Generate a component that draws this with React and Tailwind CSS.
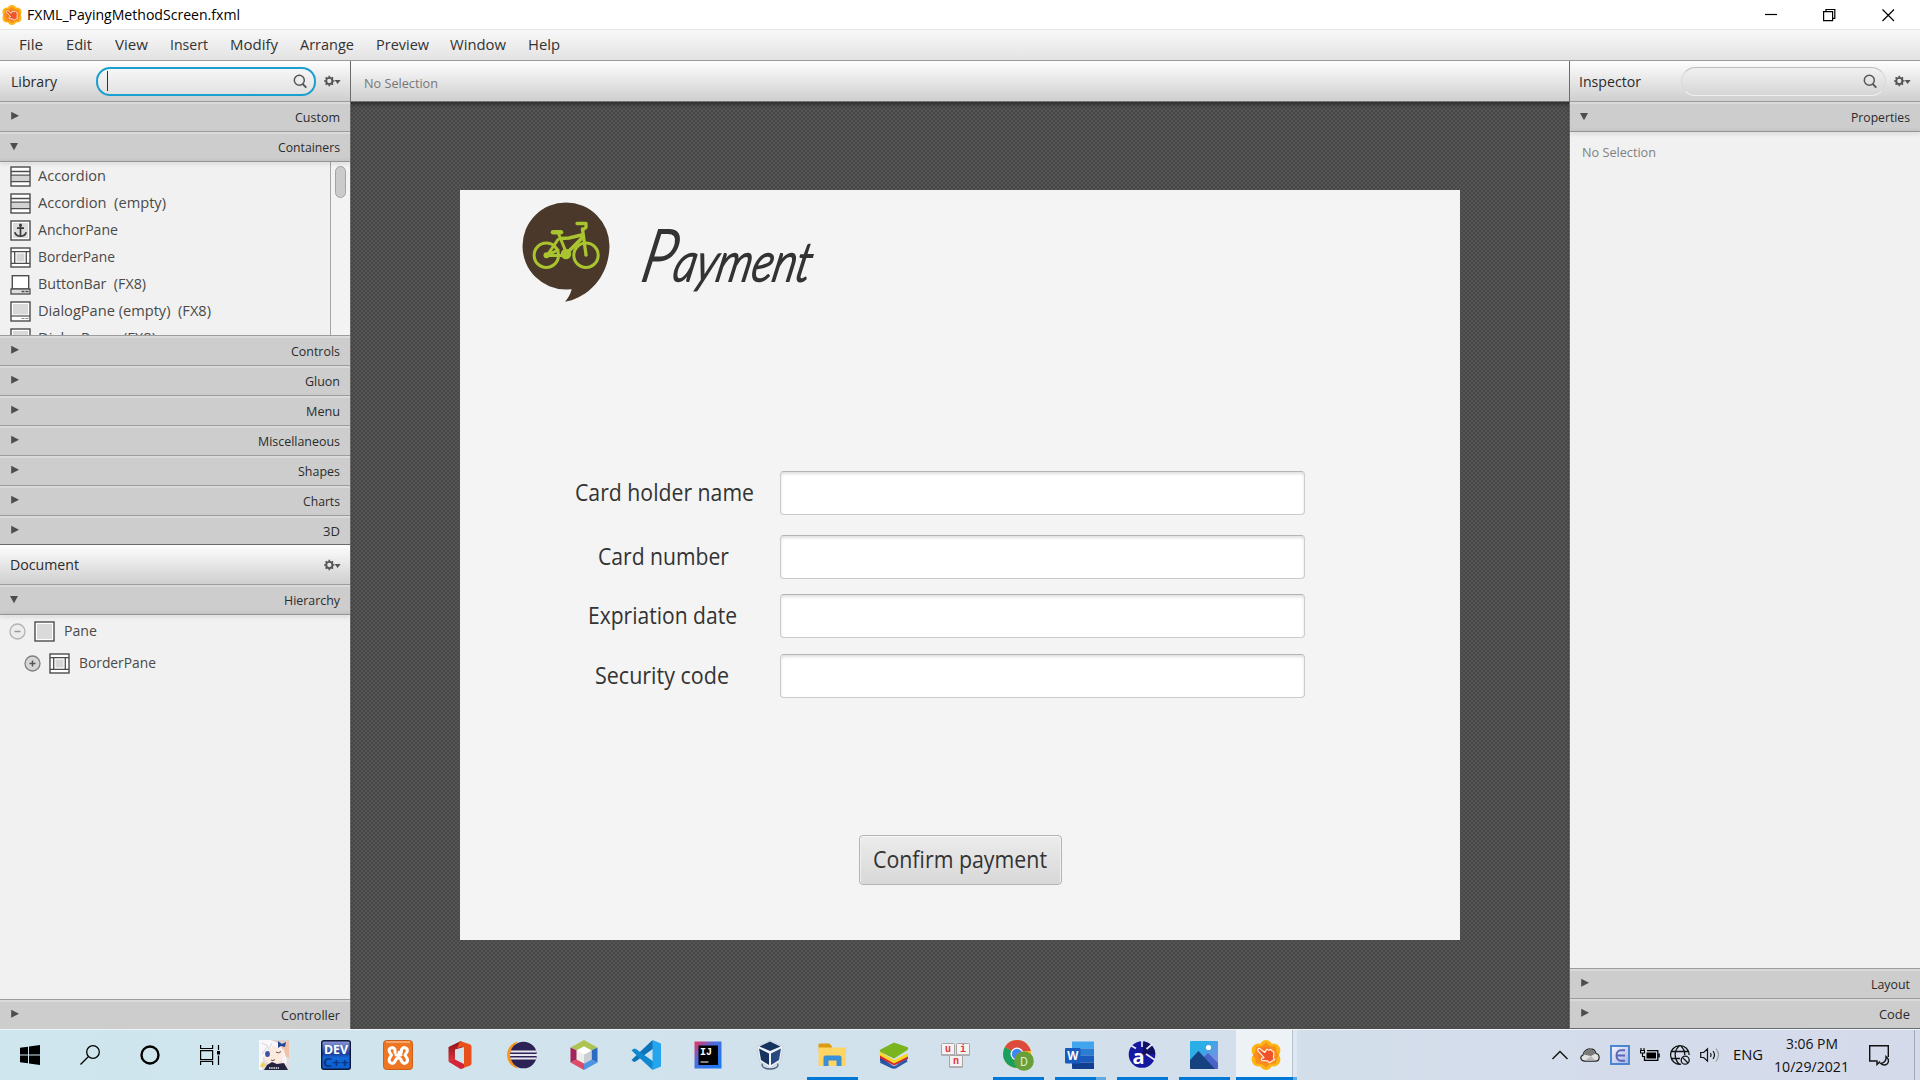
import React, { useLayoutEffect, useRef } from "react";

/* Text set to a fixed measure: glyphs are condensed or widened to fill `w`. */
function T({ w, className = "", children }) {
  const ref = useRef(null);
  useLayoutEffect(() => {
    const el = ref.current;
    el.style.transform = "none";
    const natural = el.getBoundingClientRect().width;
    if (natural) el.style.transform = `scaleX(${w / natural})`;
  }, [w, children]);
  return (
    <span className={`inline-block shrink-0 whitespace-pre ${className}`} style={{ width: w }}>
      <span ref={ref} className="inline-block origin-left">{children}</span>
    </span>
  );
}

const Gear = () => (
  <svg width="17" height="12" viewBox="0 0 17 12" className="shrink-0">
    <circle cx="5.3" cy="6" r="3.1" fill="none" stroke="#555" strokeWidth="1.9" />
    <g stroke="#555" strokeWidth="1.7">
      <path d="M5.3 .8v1.8M5.3 9.4v1.8M.1 6h1.8M8.7 6h1.8M1.6 2.3l1.3 1.3M7.7 8.4L9 9.7M9 2.3L7.7 3.6M2.9 8.4L1.6 9.7" />
    </g>
    <path d="M10.6 5h6l-3 4z" fill="#555" />
  </svg>
);

const Magnifier = () => (
  <svg width="15" height="15" viewBox="0 0 15 15" fill="none" stroke="#555" strokeWidth="1.5" className="shrink-0">
    <circle cx="6.3" cy="6.3" r="5" />
    <path d="M9.6 9.9L13.3 13.6" strokeWidth="2" />
  </svg>
);

function Section({ label, w, open, bottom = "", className = "" }) {
  return (
    <div className={`flex h-[30px] shrink-0 justify-between border-t border-[#9c9c9c] bg-[#cdcdcd] pl-[10px] pr-[10px] ${bottom} ${className}`}>
      <svg width="10" height="10" viewBox="0 0 10 10" className="mt-[9px]">
        {open ? <path d="M0 2h8L4 9.3z" fill="#4d4d4d" /> : <path d="M1.2.8v8L9 4.8z" fill="#4d4d4d" />}
      </svg>
      <T w={w} className="mt-[6px] text-[13px] leading-[18px] text-[#2b2b2b]">{label}</T>
    </div>
  );
}
const stripe = "shadow-[inset_0_2px_0_#dadada]";

const S = "#4c4c4c";
function PaneIcon({ kind }) {
  return (
    <svg width="21" height="21" viewBox="0 0 21 21" className="shrink-0">
      {kind !== "buttonbar" && <rect x="1" y="1" width="19" height="19" fill="#fff" stroke={S} strokeWidth="1.4" />}
      {kind === "accordion" && (
        <g>
          <rect x="2" y="10" width="17" height="5" fill="#d2d2d2" />
          <path d="M1 5.5h19M1 9.2h19M1 15.6h19" stroke={S} strokeWidth="1.3" />
        </g>
      )}
      {kind === "anchor" && (
        <g>
          <rect x="3" y="3" width="15" height="15" fill="#dcdcdc" />
          <g fill="none" stroke="#3a3a3a" strokeWidth="1.7">
            <path d="M10.5 5v11M7 8.2h7M4.8 12.2c1 3 3.5 4 5.7 4s4.700-1 5.700-4" />
          </g>
          <circle cx="10.5" cy="5" r="1.5" fill="#3a3a3a" />
        </g>
      )}
      {kind === "border" && (
        <g>
          <path d="M1 4.700h19M1 16.300h19M4.700 4.700v11.600M16.300 4.700v11.600" stroke={S} strokeWidth="1.3" />
          <rect x="6.500" y="6.500" width="8" height="8" fill="#d6d6d6" />
        </g>
      )}
      {kind === "buttonbar" && (
        <g>
          <rect x="2.300" y="1.700" width="16.400" height="13.300" fill="#fff" stroke={S} strokeWidth="1.4" />
          <rect x="1" y="15" width="19" height="5" fill="#dcdcdc" stroke={S} strokeWidth="1.3" />
          <path d="M11.500 17.500h3M15.500 17.500h3" stroke={S} strokeWidth="1.300" />
        </g>
      )}
      {kind === "dialog" && (
        <g>
          <rect x="3" y="3" width="15" height="10.500" fill="#d9d9d9" />
          <path d="M1 15h19" stroke={S} strokeWidth="1.200" />
          <path d="M11.500 17.500h3M15.500 17.500h3" stroke="#8a8a8a" />
        </g>
      )}
      {kind === "pane" && <rect x="3" y="3" width="15" height="15" fill="#dadada" />}
    </svg>
  );
}

const SceneBuilder = ({ size }) => (
  <svg width={size} height={size} viewBox="0 0 30 30" className="shrink-0">
    <g fill="#fdb514">
      <circle cx="15" cy="6.500" r="6.400" /><circle cx="22.500" cy="10.500" r="6.900" /><circle cx="22.500" cy="19.500" r="6.900" />
      <circle cx="15" cy="23.500" r="6.400" /><circle cx="7.500" cy="19.500" r="6.900" /><circle cx="7.500" cy="10.500" r="6.900" />
    </g>
    <path d="M15 2.500l4 3.500 6 .8.800 5.200L28 15l-2.200 3.500-.8 5-6 .700L15 27.500l-4-3.300-6-.7-.800-5L2 15l2.200-3 .8-5.200L11 6z" fill="#f98d1d" />
    <circle cx="15" cy="15" r="8" fill="#f6781f" />
    <path d="M6.800 9.200c.8-1.300 2-.7 3 .2l4 3 2.200-3.200 2 1 1.600-.8 1.600 1.600c1.500.2 1.800 1.500 1.600 3l-.4 3.500 1 2-5.200 3.200-1.700-1.800-5-.2c-1.800-.6-1.600-2.400 0-2.600l1.500-.5-5.700-6.400c-.6-.7-.8-1.300-.5-2z" fill="#f0522a" stroke="#fff3e6" strokeWidth="1.200" strokeLinejoin="round" />
  </svg>
);

const menu = [
  ["File", 24, "ml-[19px]"], ["Edit", 26, "ml-[23px]"], ["View", 33, "ml-[23px]"], ["Insert", 38, "ml-[22px]"], ["Modify", 48, "ml-[22px]"],
  ["Arrange", 54, "ml-[22px]"], ["Preview", 53, "ml-[22px]"], ["Window", 56, "ml-[21px]"], ["Help", 32, "ml-[22px]"],
];

const containers = [
  ["accordion", "Accordion", 68], ["accordion", "Accordion  (empty)", 128], ["anchor", "AnchorPane", 80], ["border", "BorderPane", 77],
  ["buttonbar", "ButtonBar  (FX8)", 108], ["dialog", "DialogPane (empty)  (FX8)", 173], ["dialog", "DialogPane  (FX8)", 118],
];

function Library() {
  return (
    <aside className="flex w-[351px] shrink-0 flex-col border-r border-[#6b6b6b] bg-[#f1f1f1]">
      <div className="flex h-[40px] shrink-0 items-center bg-linear-to-b from-[#fefefe] to-[#cfcfcf]">
        <T w={46} className="ml-[11px] mt-px text-[14.500px] leading-[20px] text-[#2b2b2b]">Library</T>
        <div className="ml-[39px] flex h-[29px] w-[220px] items-center justify-between rounded-[14px] border-2 border-[#1b9fcf] bg-linear-to-b from-[#f6f6f6] to-[#e2e2e2] pl-[9px] pr-[6px]">
          <div className="h-[20px] w-px bg-[#333]" />
          <Magnifier />
        </div>
        <div className="ml-[8px]"><Gear /></div>
      </div>
      <Section label="Custom" w={45} className={stripe} />
      <Section label="Containers" w={62} open className={stripe} />
      <div className="z-10 h-px shrink-0 bg-[#949494] shadow-[0_1px_4px_rgba(0,0,0,.35)]" />
      <div className="flex h-[173px] shrink-0 overflow-hidden">
        <div className="flex w-[330px] flex-col pt-[1px]">
          {containers.map(([k, t, w], i) => (
            <div key={i} className="flex h-[27px] shrink-0 items-center pl-[10px]">
              <PaneIcon kind={k} />
              <T w={w} className="mb-[2px] ml-[7px] text-[14.500px] leading-[20px] text-[#4a4a4a]">{t}</T>
            </div>
          ))}
        </div>
        <div className="flex w-[20px] justify-center border-l border-[#a5a5a5] bg-[#f3f3f3] pt-[4px]">
          <div className="h-[32px] w-[11px] rounded-full border border-[#a3a3a3] bg-[#cbcbcb]" />
        </div>
      </div>
      <Section label="Controls" w={49} className={stripe} />
      <Section label="Gluon" w={35} className={stripe} />
      <Section label="Menu" w={34} className={stripe} />
      <Section label="Miscellaneous" w={82} className={stripe} />
      <Section label="Shapes" w={42} className={stripe} />
      <Section label="Charts" w={37} className={stripe} />
      <Section label="3D" w={17} bottom="border-b border-b-[#6b6b6b]" className={stripe} />
      <div className="flex h-[39px] shrink-0 items-center justify-between bg-linear-to-b from-[#fefefe] to-[#cfcfcf] pl-[10px] pr-[9px]">
        <T w={69} className="text-[14.500px] leading-[20px] text-[#2b2b2b]">Document</T>
        <Gear />
      </div>
      <Section label="Hierarchy" w={56} open className={stripe} />
      <div className="h-px shrink-0 bg-[#949494] shadow-[0_1px_4px_rgba(0,0,0,.35)]" />
      <div className="flex grow flex-col">
        <div className="flex h-[32px] items-center pl-[9px]">
          <svg width="17" height="17" viewBox="0 0 17 17"><circle cx="8.500" cy="8.500" r="7.500" fill="#ececec" stroke="#b3b3b3" strokeWidth="1.300" /><path d="M5.500 8.500h6" stroke="#999" strokeWidth="1.500" /></svg>
          <div className="ml-[8px]"><PaneIcon kind="pane" /></div>
          <T w={33} className="ml-[9px] text-[14.500px] leading-[20px] text-[#4a4a4a]">Pane</T>
        </div>
        <div className="flex h-[32px] items-center pl-[24px]">
          <svg width="17" height="17" viewBox="0 0 17 17"><circle cx="8.500" cy="8.500" r="7.500" fill="#d6d6d6" stroke="#808080" strokeWidth="1.300" /><path d="M5.500 8.500h6M8.500 5.500v6" stroke="#555" strokeWidth="1.500" /></svg>
          <div className="ml-[8px]"><PaneIcon kind="border" /></div>
          <T w={77} className="ml-[9px] text-[14.500px] leading-[20px] text-[#4a4a4a]">BorderPane</T>
        </div>
      </div>
      <Section label="Controller" w={59} className={stripe} />
    </aside>
  );
}

function Logo() {
  const g = "#a9c42f";
  return (
    <svg width="88" height="100" viewBox="0 0 88 100" className="shrink-0">
      <path d="M44 .5A43.500 43.500 0 0 0 44 87.500L49.700 87.300Q48 94 43 99.700C62 97 87 78 87.500 44A43.500 43.500 0 0 0 44 .5z" fill="#4a392a" />
      <g fill="none" stroke={g} strokeLinecap="round" strokeLinejoin="round">
        <circle cx="24.300" cy="53.300" r="12.200" strokeWidth="3" />
        <circle cx="64" cy="53.300" r="12.200" strokeWidth="3" />
        <path d="M55 21.500h9v4l-3.500 2.500" strokeWidth="3.300" />
        <path d="M60.500 27l3.500 26" strokeWidth="3.300" />
        <path d="M39 36.500l8-.5 12.500-3M60.500 35.500L46 50" strokeWidth="3.500" />
        <path d="M37 33l7 17M36 37.500L25 53.500h18M24.500 53.500L36 48" strokeWidth="3" />
        <path d="M31 30.200h8" strokeWidth="4.500" />
      </g>
      <circle cx="44" cy="52" r="5.200" fill={g} />
      <circle cx="24.500" cy="53.300" r="3" fill={g} />
    </svg>
  );
}

const fields = [
  ["Card holder name", 179, "ml-[115px]", "h-[64px]"], ["Card number", 131, "ml-[138px]", "h-[59px]"],
  ["Expriation date", 149, "ml-[128px]", "h-[60px]"], ["Security code", 134, "ml-[135px]", "h-[60px]"],
];

function Canvas() {
  return (
    <main className="flex w-[1218px] shrink-0 flex-col">
      <div className="flex h-[41px] shrink-0 items-center border-b border-[#777] bg-linear-to-b from-[#fefefe] to-[#cfcfcf] pl-[13px]">
        <T w={74} className="mt-[3px] text-[13px] leading-[18px] text-[#777]">No Selection</T>
      </div>
      <div className="flex grow bg-[repeating-conic-gradient(#555_0_25%,#474747_0_50%)] bg-[length:4px_4px] pl-[109px] pt-[88px] shadow-[inset_0_4px_4px_-2px_rgba(0,0,0,.5)]">
        <div className="flex h-[750px] w-[1000px] flex-col bg-[#f4f4f4]">
          <div className="flex h-[281px] shrink-0 items-start pl-[62px] pt-[12px]">
            <Logo />
            <div className="ml-[34px] mt-[9px] -skew-x-[12deg] font-['Lato'] text-[72px] font-light italic leading-[84px] text-[#333] [-webkit-text-stroke:2px_#333] [paint-order:stroke]">
              <T w={186}>P<span className="text-[54px]">ayment</span></T>
            </div>
          </div>
          {fields.map(([t, w, ml, h]) => (
            <div key={t} className={`flex shrink-0 items-start ${h}`}>
              <div className="flex h-[42px] w-[320px] items-center">
                <T w={w} className={`text-[23px] leading-[30px] text-[#333] ${ml}`}>{t}</T>
              </div>
              <div className="h-[44px] w-[525px] rounded-[4px] border border-[#cbcbcb] border-t-[#b4b4b4] bg-white shadow-[inset_0_2px_3px_rgba(0,0,0,.12)]" />
            </div>
          ))}
          <div className="ml-[399px] mt-[121px] flex h-[50px] w-[203px] items-center justify-center rounded-[4px] border border-[#b3b3b3] bg-linear-to-b from-[#ececec] to-[#d8d8d8] pb-[2px] pr-[2px] shadow-[inset_0_1px_0_#fafafa,inset_1px_0_0_#f0f0f0,inset_-1px_0_0_#f0f0f0]">
            <T w={174} className="text-[23px] leading-[30px] text-[#333]">Confirm payment</T>
          </div>
        </div>
      </div>
    </main>
  );
}

function Inspector() {
  return (
    <aside className="flex w-[351px] shrink-0 flex-col border-l border-[#6b6b6b] bg-[#f1f1f1]">
      <div className="flex h-[40px] shrink-0 items-center bg-linear-to-b from-[#fefefe] to-[#cfcfcf]">
        <T w={62} className="ml-[9px] mt-px text-[14.500px] leading-[20px] text-[#2b2b2b]">Inspector</T>
        <div className="ml-[40px] flex h-[29px] w-[205px] items-center justify-end rounded-full border border-[#d8d8d8] border-b-[#f0f0f0] border-t-[#bdbdbd] bg-linear-to-b from-[#f1f1f1] to-[#d6d6d6] pr-[7px]">
          <Magnifier />
        </div>
        <div className="ml-[8px]"><Gear /></div>
      </div>
      <Section label="Properties" w={59} open className={stripe} />
      <div className="h-px shrink-0 bg-[#949494] shadow-[0_1px_4px_rgba(0,0,0,.35)]" />
      <div className="flex grow items-start pl-[12px] pt-[10px]">
        <T w={74} className="text-[13px] leading-[20px] text-[#808080]">No Selection</T>
      </div>
      <Section label="Layout" w={39} className={stripe} />
      <Section label="Code" w={31} className={stripe} />
      <div className="h-px shrink-0 bg-[#6b6b6b]" />
    </aside>
  );
}

const Svg = ({ children, s = 30 }) => <svg width={s} height={s} viewBox={`0 0 ${s} ${s}`} className="shrink-0">{children}</svg>;

const Start = () => <Svg s={20}><path d="M0 2.800l8-1.100v7.800H0zM9 1.500L20 0v9.500H9zM0 10.500h8v7.800l-8-1.100zM9 10.500h11V20L9 18.500z" /></Svg>;
const Search = () => <Svg s={20}><g fill="none" stroke="#000" strokeWidth="1.300"><circle cx="13" cy="7" r="6.300" /><path d="M8.500 11.500L.5 19.500" /></g></Svg>;
const Cortana = () => <Svg s={20}><circle cx="10" cy="10" r="8.500" fill="none" stroke="#000" strokeWidth="2.400" /></Svg>;
const TaskView = () => <Svg s={20}><g fill="none" stroke="#000" strokeWidth="1.200"><path d="M.6 0v3.500h12V0M.6 20v-3.500h12V20M.6 5.600h12v9H.6zM18.500 0v5M18.500 10.500V20" /></g><rect x="17" y="6" width="3" height="3.500" /></Svg>;

const Anime = () => (
  <Svg>
    <rect width="30" height="30" fill="#e4dcdd" />
    <path d="M0 0h30v9l-4 3-8-8L7 7 0 16z" fill="#d9cfc9" />
    <path d="M21 5l9-3v16l-6-3z" fill="#f0c3a8" />
    <path d="M4 10c4-7 15-8 20 1 1 8-3 14-9 14S3 20 4 10z" fill="#fdeadf" />
    <path d="M0 0h12l9 4 4 9-6-5-5-3-5 8-5 4-1 13H0z" fill="#f8f7f9" />
    <path d="M3 3l6 3-6 8M13 3l-4 7" stroke="#cfc8d4" strokeWidth=".8" fill="none" />
    <path d="M24 8l4 12-2 8-3-4z" fill="#f7f4f5" />
    <path d="M19 1l4 3 4-2-1 5-4-1-3 2z" fill="#26469a" />
    <ellipse cx="8.500" cy="14" rx="2.400" ry="3" fill="#3e55a5" />
    <path d="M17 12q2.500 2 5-.5M12 20q2 1.500 4-.5" stroke="#6d4a55" fill="none" />
    <path d="M8 25l5-3 5 2 7-1 4 7H5z" fill="#24223c" />
    <path d="M2 24l2-2 3 3-3 2H1z" fill="#f2cf55" />
    <path d="M10 28h10" stroke="#e8e8f0" strokeWidth="1.500" strokeDasharray="1.500 .7" />
  </Svg>
);
const Dev = () => (
  <Svg>
    <defs><linearGradient id="dv" x2="0" y2="1"><stop offset="0" stopColor="#8d9bd8" /><stop offset=".45" stopColor="#1d3c9c" /><stop offset=".6" stopColor="#1268d8" /><stop offset="1" stopColor="#0a5fd0" /></linearGradient></defs>
    <rect x=".7" y=".7" width="28.600" height="28.600" rx="2" fill="url(#dv)" stroke="#10183a" strokeWidth="1.400" />
    <text x="3" y="13.500" fontSize="11.500" fontWeight="700" textLength="24" lengthAdjust="spacingAndGlyphs" fill="#fff" fontFamily="Open Sans">DEV</text>
    <text x="2" y="27" fontSize="13" fontWeight="700" textLength="26" lengthAdjust="spacingAndGlyphs" fill="#0a3684" fontFamily="Open Sans">C++</text>
  </Svg>
);
const Xampp = () => (
  <Svg>
    <rect x=".5" y=".5" width="29" height="29" rx="3" fill="#ee7623" stroke="#cd5f17" />
    <path d="M3 2h24" stroke="#f7b688" strokeWidth="1.500" />
    <path d="M12 12.500V9.500c-2-3.500-7-1.500-5.500 2.500L8.500 15l-2 3.500c-1.500 4.500 3.500 6.500 5.500 3 .8-2.500 1.500-3.500 3.500-3.500s2.500 1 3.200 3.500c2 3.500 7 1.500 5.500-3L22 15l2-3c1.500-4-3.500-6-5.500-2.500v2.700h-2.500M13 15h5" fill="none" stroke="#fff" strokeWidth="3" strokeLinecap="round" strokeLinejoin="round" />
  </Svg>
);
const Office = () => (
  <Svg>
    <defs><linearGradient id="of" x2="0" y2="1"><stop offset="0" stopColor="#8d0f16" /><stop offset="1" stopColor="#e03a3e" /></linearGradient></defs>
    <path d="M3.500 7L16 1l3 6-9 2.500V20l-4 3-2.500-1.500z" fill="url(#of)" />
    <path d="M15 1l9 3c1.500.5 2.500 1 2.500 3v16c0 2-1 2.500-2.500 3l-8.500 3V25L19 24V6.500L12 8z" fill="#e8501c" />
    <path d="M4 22l6-2.500 9 4.500v4l-3.500 1z" fill="#d3243b" />
  </Svg>
);
const Eclipse = () => (
  <Svg>
    <path d="M11 1.500C-3.500 5-3.500 25 11 28.500 4 23 4 7 11 1.500z" fill="#f7941e" />
    <circle cx="16.500" cy="15" r="13.300" fill="#2c2255" />
    <path d="M3.500 11.500h26M3 15h27M3.500 18.500h26" stroke="#e9e6f2" strokeWidth="1.900" />
  </Svg>
);
const NetBeans = () => (
  <Svg>
    <path d="M15 0l13.500 7.500L21 11l-6-3-6 3-7.500-3.500z" fill="#adc452" />
    <path d="M1.500 7.500L9 11v8l-7.500 3.500z" fill="#a3245b" /><path d="M1.500 22.500L9 19l6 3v8z" fill="#de4a68" />
    <path d="M28.500 7.500L21 11v8l7.500 3.500z" fill="#2c6cc0" /><path d="M28.500 22.500L21 19l-6 3v8z" fill="#4f94e0" />
    <path d="M15 6.500l7.500 4v9L15 23.500l-7.500-4v-9z" fill="#eceee9" /><path d="M15 14.500l7.500-4v9l-7.500 4z" fill="#c9ced4" /><path d="M15 6.500l7.500 4-7.500 4-7.500-4z" fill="#fff" />
  </Svg>
);
const VSCode = () => (
  <Svg>
    <path d="M21.500 0L2 18.500.5 20l2.500 2 2-.8L23 8z" fill="#0d74ba" />
    <path d="M21.500 30L.5 10.500l2.500-2 2 .5L23 22z" fill="#1088cf" />
    <path d="M21.500 0L30 3.500v23L21.500 30z" fill="#24a5ee" />
  </Svg>
);
const IntelliJ = () => (
  <Svg>
    <defs><linearGradient id="ij" x2="1" y2="1"><stop offset="0" stopColor="#f2305e" /><stop offset=".4" stopColor="#4a6fe0" /><stop offset="1" stopColor="#147bf5" /></linearGradient></defs>
    <rect x="1.500" y="1.500" width="27" height="27" fill="url(#ij)" /><rect x="5.500" y="5.500" width="19.500" height="19.500" fill="#000" />
    <text x="7" y="15" fontSize="10" fontWeight="700" fill="#fff" fontFamily="Liberation Mono">IJ</text>
    <path d="M7.500 22h8" stroke="#aaa" strokeWidth="1.500" />
  </Svg>
);
const VBox = () => (
  <Svg>
    <ellipse cx="15" cy="25" rx="8" ry="4" fill="none" stroke="#4b5e80" strokeWidth="1.300" />
    <path d="M15 .5l13 6-2.500 15L15 28 4.500 21.500 2 6.500z" fill="#eef2f7" stroke="#b7c3d4" strokeWidth=".6" />
    <path d="M15 1.500l10.500 5L15 11 4.500 6.500z" fill="#16335f" /><path d="M4 8.500l10 5v11.500l-8-5z" fill="#16335f" /><path d="M26 8.500l-10 5v11.500l8-5z" fill="#274b80" />
  </Svg>
);
const Explorer = () => (
  <Svg>
    <path d="M1.500 5c0-1 .5-1.500 1.500-1.500h9.500L15 6.500v3H1.500z" fill="#dc9b10" />
    <path d="M1.500 7.500h26.500c.6 0 1 .4 1 1V25c0 .6-.4 1-1 1H2.500c-.6 0-1-.4-1-1z" fill="#fed462" />
    <path d="M6.500 26v-8.500c0-1 .5-2 2-2h14c1.500 0 2 1 2 2V26h-5v-5.500h-8V26z" fill="#3a90d8" />
  </Svg>
);
const BlueStacks = () => (
  <Svg>
    <path d="M1 17l14 9.500L29 16v3L15 26.500 1 21z" fill="#27489d" /><path d="M1 14.500l14 8L29 14v4.500l-14 7L1 18z" fill="#d3282f" /><path d="M1 12l14 8 14-7v3.500l-14 7-14-8z" fill="#f9d923" />
    <path d="M1.500 9.500L15 2.500l13 4.500c1.500.6 1.500 1.500.5 3L15 18.500 1.500 12c-1-.8-1-1.700 0-2.500z" fill="#7ab51f" />
    <path d="M1.500 21.500L13 27q2 .8 4 0l11-6.500" fill="none" stroke="#2858a8" strokeWidth="2.500" />
  </Svg>
);
const Keys = () => (
  <Svg>
    {[["u", 0, 3], ["i", 15, 3], ["n", 8, 15]].map(([c, x, y]) => (
      <g key={c}><rect x={x + 0.500} y={y + 0.500} width="13" height="11.500" rx="1" fill="#f5f2f2" stroke="#aaa5a5" /><path d={`M${x} ${y + 12}h14`} stroke="#999" />
        <text x={x + 7} y={y + 9} fontSize="10" fontWeight="700" textAnchor="middle" fill="#e03540" fontFamily="Liberation Mono">{c}</text></g>
    ))}
  </Svg>
);
const Chrome = () => (
  <Svg s={32}>
    <circle cx="15" cy="15" r="14" fill="#fbc116" />
    <path d="M15 15L2.900 8A14 14 0 0 1 27.500 8.500L29 12H15z" fill="#dd4b3e" /><path d="M15 15L2.900 8A14 14 0 0 0 15 29l5-7z" fill="#19a05f" />
    <circle cx="15" cy="15" r="6.500" fill="#fff" /><circle cx="15" cy="15" r="5.200" fill="#4285f4" />
    <circle cx="22" cy="22" r="9.800" fill="#689f38" />
    <text x="22" y="26.500" textAnchor="middle" fontSize="12" fill="#dcedc8" fontFamily="Roboto">D</text>
  </Svg>
);
const Word = () => (
  <Svg>
    <path d="M7 1.500h22v7H7z" fill="#41a5ee" /><path d="M7 8.500h22v7H7z" fill="#2b7cd3" /><path d="M7 15.500h22v7H7z" fill="#185abd" /><path d="M7 22.500h22v6.500H8q-1 0-1-1z" fill="#103f91" />
    <rect x="0" y="8" width="15.500" height="15.500" rx="1" fill="#185abd" />
    <text x="7.700" y="20" textAnchor="middle" fontSize="11.500" fontWeight="700" fill="#fff" fontFamily="Open Sans">W</text>
  </Svg>
);
const Astah = () => (
  <Svg>
    <circle cx="15" cy="14.500" r="13.300" fill="#1718a0" />
    <path d="M15 14.500L17 1.500A13.300 13.300 0 0 1 28.300 14z" fill="#121160" />
    <path d="M15 7V1M9 8.500L4 5.500M19.500 9l6-5M19 14l9 6" stroke="#e6eaf6" strokeWidth="1.700" />
    <text x="11.500" y="23.500" textAnchor="middle" fontSize="20" fontWeight="700" fill="#fff" fontFamily="Open Sans">a</text>
  </Svg>
);
const Photos = () => (
  <Svg>
    <defs><linearGradient id="ph" x2="1" y2="1"><stop offset=".3" stopColor="#29aee6" /><stop offset="1" stopColor="#9d7fe0" /></linearGradient></defs>
    <rect x="1" y="1" width="28" height="28" rx="1" fill="url(#ph)" />
    <path d="M14 18l5-5 10 10v5q0 1-1 1H10z" fill="#4a63c8" /><path d="M1 20L9.500 11 26 29H2q-1 0-1-1z" fill="#15437f" /><circle cx="19.500" cy="7.500" r="2.600" fill="#fff" />
  </Svg>
);

const apps = [
  [Anime], [Dev], [Xampp], [Office], [Eclipse], [NetBeans], [VSCode], [IntelliJ], [VBox], [Explorer, "on"], [BlueStacks], [Keys],
  [Chrome, "on"], [Word, "multi"], [Astah, "on"], [Photos, "on"],
];

function Taskbar() {
  return (
    <footer className="flex h-[51px] shrink-0 border-t border-[#eef6f9] bg-linear-to-r from-[#cfe6ee] via-[#d2e1ec] to-[#d5daea]">
      {[Start, Search, Cortana, TaskView].map((I, i) => (
        <div key={i} className="flex w-[60px] shrink-0 items-center justify-center"><I /></div>
      ))}
      <div className="w-[3px] shrink-0" />
      {apps.map(([I, st], i) => (
        <div key={i} className="flex w-[62px] shrink-0 flex-col items-center">
          <div className="flex h-[47px] items-center pt-[3px]"><I /></div>
          {st === "on" && <div className="h-[3px] w-[51px] bg-[#0078d7]" />}
          {st === "multi" && <div className="flex h-[3px] w-[51px] bg-[#62a9e4]"><div className="w-[41px] bg-[#0078d7]" /></div>}
        </div>
      ))}
      <div className="ml-[1px] flex w-[57px] shrink-0 flex-col items-center border-r border-[#b3c1d1] bg-[#edf2f7]">
        <div className="flex h-[47px] items-center pl-[4px] pt-[3px]"><SceneBuilder size={30} /></div>
        <div className="h-[3px] w-[57px] bg-[#0078d7]" />
      </div>
      <div className="flex w-[4px] shrink-0 flex-col justify-end bg-[#dfe8f0]"><div className="h-[3px] bg-[#62a9e4]" /></div>
      <div className="ml-auto flex items-center">
        <svg width="16" height="10" viewBox="0 0 16 10" className="mr-[12px]"><path d="M.5 9L8 1.500 15.500 9" fill="none" stroke="#111" strokeWidth="1.400" /></svg>
        <svg width="20" height="14" viewBox="0 0 20 14" className="mr-[10px]">
          <path d="M5 13.200C.5 13.200-.6 8.500 3 7 3.500 3 7 .7 10 .8c3 0 5.500 2 6 4.700 4 .7 4.500 7.700-.5 7.700z" fill="#e3e3e3" stroke="#222" strokeWidth="1.200" />
          <path d="M3.500 6.500C4 3 7 1.400 10 1.400c2.800 0 4.800 1.600 5.500 4L11 8z" fill="#7a7a7a" /><path d="M5 12.600L11 8l4.500 4.600z" fill="#b9b9b9" />
        </svg>
        <div className="mr-[10px] flex h-[20px] w-[20px] items-center justify-center border-2 border-[#4d86cf] bg-linear-to-br from-[#f3f5fd] to-[#a9b3e6]">
          <svg width="11" height="13" viewBox="0 0 11 13"><path d="M10 1.200H6C0 1.200 0 11.800 6 11.800h4M1.500 6.500H10" fill="none" stroke="#5a64b4" strokeWidth="1.900" /></svg>
        </div>
        <svg width="20" height="14" viewBox="0 0 20 14" className="mr-[10px]">
          <path d="M4.500 8v4.300h13.300V2.700H7" fill="none" stroke="#000" strokeWidth="1.300" /><rect x="6.500" y="4.500" width="9.500" height="6" /><rect x="18.200" y="5.500" width="1.600" height="4" />
          <path d="M1 0v2M4 0v2M.5 2.500h4v2.500h-4zM2.500 5v3.500h2" fill="none" stroke="#000" strokeWidth="1.100" />
        </svg>
        <svg width="20" height="20" viewBox="0 0 20 20" className="mr-[10px]" fill="none" stroke="#111" strokeWidth="1.300">
          <path d="M11 19.200A9.300 9.300 0 1 1 19.200 10M9.500 .7C3 6 4.500 15 9.500 19.200M10.500.7c3 2.500 4.300 6 4.300 9.300M1 6.500h18M1 13.500h9" /><circle cx="15.200" cy="15.200" r="4" /><path d="M12.400 12.400l5.600 5.600" />
        </svg>
        <svg width="20" height="16" viewBox="0 0 20 16" className="mr-[13px]" fill="none" stroke="#111" strokeWidth="1.200">
          <path d="M.7 5.500h3L7.500 1.800v12.400L3.700 10.500h-3zM10.500 6q1.300 2 0 4" /><path d="M13 4q3 4 0 8" /><path d="M16 1.500q5 6.500 0 13" stroke="#999" />
        </svg>
        <T w={30} className="text-[14.500px] leading-[20px] text-[#111]">ENG</T>
        <div className="mb-px ml-[11px] flex w-[75px] flex-col items-center text-[14.500px] leading-[23px] text-[#111]">
          <T w={52}>3:06 PM</T>
          <T w={75}>10/29/2021</T>
        </div>
        <svg width="21" height="21" viewBox="0 0 21 21" className="ml-[20px] mr-[24px]">
          <path d="M11 16.500L8 19.500V16H.7V.7h18.600V12" fill="none" stroke="#111" strokeWidth="1.400" /><path d="M17 11.500c3.500 2.500 3.500 7.800-1.500 8.500-2 0-3-.7-4-1.700 3.500 0 6-2.500 5.500-6.800z" fill="none" stroke="#111" strokeWidth="1.300" />
        </svg>
        <div className="h-[50px] w-[6px] border-l border-[#9fa9b9]" />
      </div>
    </footer>
  );
}

export default function App() {
  return (
    <div className="flex h-[1080px] w-[1920px] flex-col overflow-hidden bg-[#f1f1f1] font-['Open_Sans','Noto_Sans',sans-serif]">
      <header className="flex h-[29px] shrink-0 items-center bg-white pl-[2px]">
        <SceneBuilder size={20} />
        <T w={213} className="ml-[5px] text-[14.500px] leading-[20px] text-black">FXML_PayingMethodScreen.fxml</T>
        <svg width="130" height="14" viewBox="0 0 130 14" className="ml-auto mr-[25px]" fill="none" stroke="#000" strokeWidth="1.200">
          <path d="M0 6.500h12" /><path d="M58.600 3.600h9v9h-9zM61 3.500V1.500h8.800v8.800h-2" /><path d="M117.500 1.500l11.500 11.500M129 1.500L117.500 13" />
        </svg>
      </header>
      <nav className="flex h-[32px] shrink-0 items-center border-b border-t border-b-[#9c9c9c] border-t-[#e4e4e4] bg-linear-to-b from-[#f8f8f8] to-[#e3e3e3]">
        {menu.map(([t, w, ml]) => <T key={t} w={w} className={`text-[14.500px] leading-[20px] text-[#333] ${ml}`}>{t}</T>)}
      </nav>
      <div className="flex h-[968px] shrink-0">
        <Library />
        <Canvas />
        <Inspector />
      </div>
      <Taskbar />
    </div>
  );
}
